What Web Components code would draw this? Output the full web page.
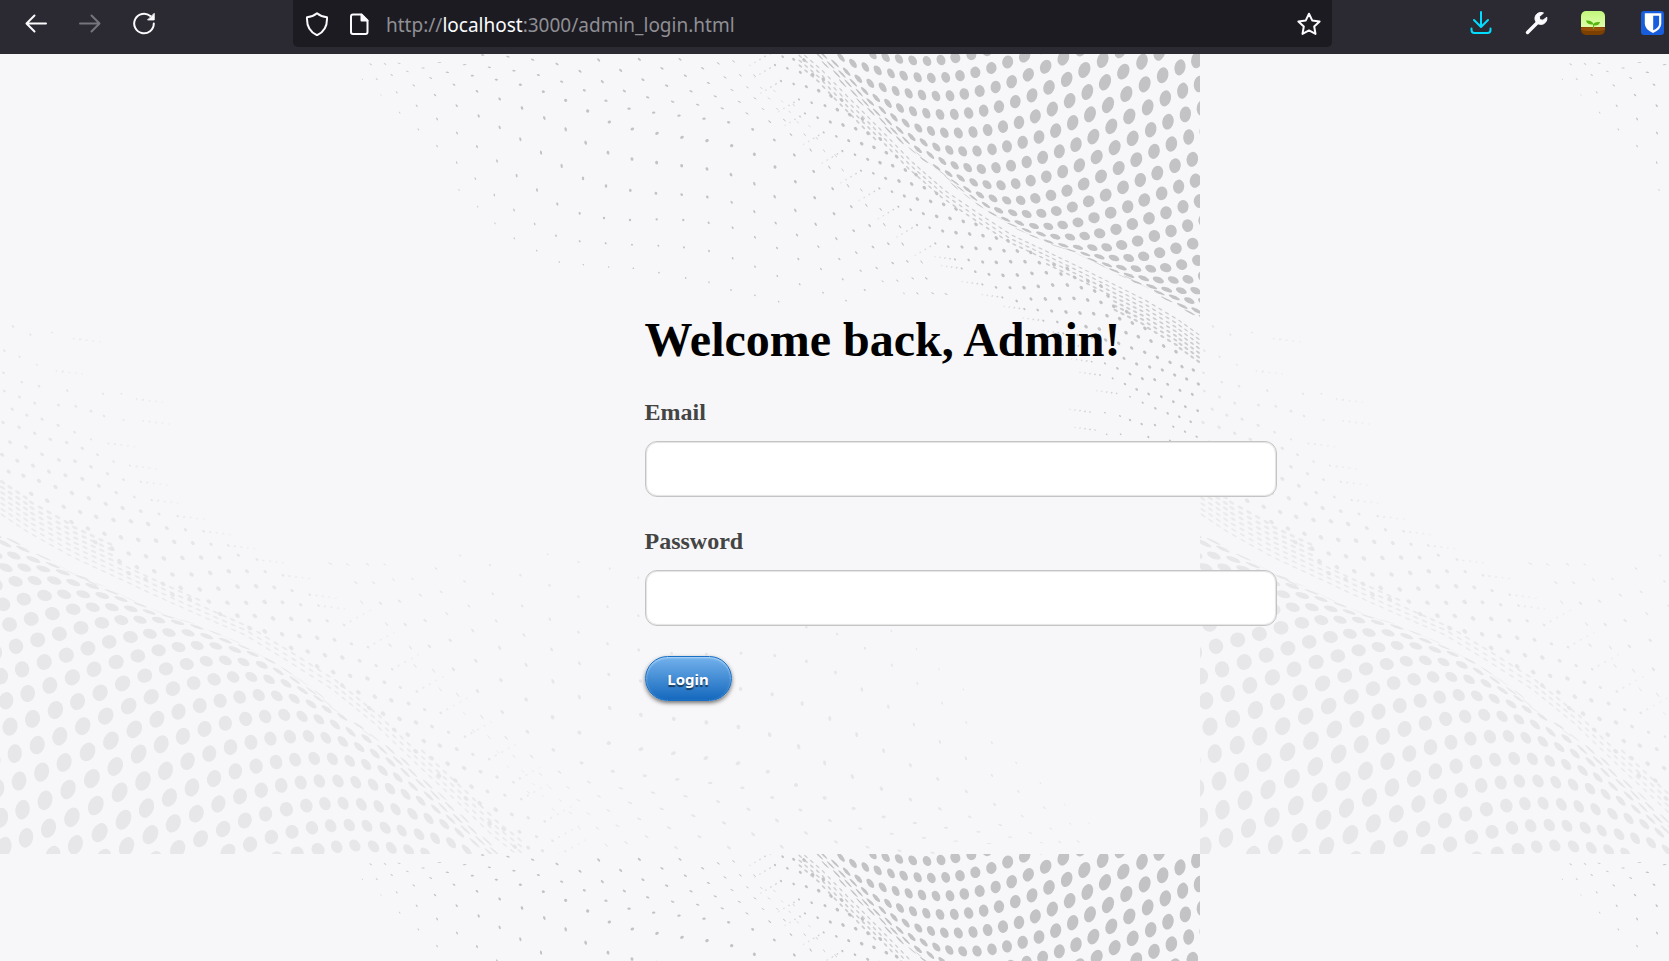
<!DOCTYPE html>
<html lang="en">
<head>
<meta charset="utf-8">
<meta name="viewport" content="width=device-width, initial-scale=1">
<title>Admin login</title>
<style>
html, body { margin: 0; }
body { min-height: 100vh; display: flex; flex-direction: column; background: #f7f7f9; font-family: "Liberation Serif", "Times New Roman", serif; }
wave-backdrop { flex: 1; }
</style>
</head>
<body>
<browser-bar>
  <span slot="scheme">http://</span><span slot="host">localhost</span><span slot="path">:3000/admin_login.html</span>
</browser-bar>
<wave-backdrop>
  <login-form>
    <span slot="title">Welcome back, Admin!</span>
    <login-field kind="email" name="email">Email</login-field>
    <login-field kind="password" name="password">Password</login-field>
    <pill-button slot="action">Login</pill-button>
  </login-form>
</wave-backdrop>

<script>
function define(name, html, setup) {
  const template = document.createElement('template');
  template.innerHTML = html;
  customElements.define(name, class extends HTMLElement {
    constructor() {
      super();
      this.attachShadow({ mode: 'open' }).append(template.content.cloneNode(true));
    }
    connectedCallback() { if (setup) setup(this, this.shadowRoot); }
  });
}

define('tool-button', `
<style>
:host { display: block; width: 56px; height: 46px; flex: none; color: #fbfbfe; }
button { width: 100%; height: 100%; padding: 0; border: 0; background: none; color: inherit; display: grid; place-items: center; }
::slotted(svg) { display: block; width: 24px; height: 24px; }
</style>
<button type="button"><slot></slot></button>`, (host, root) => {
  const button = root.querySelector('button');
  button.setAttribute('aria-label', host.getAttribute('label'));
  button.disabled = host.hasAttribute('disabled');
});

define('browser-bar', `
<style>
:host { display: flex; align-items: flex-start; height: 54px; background: #2b2a33; position: relative; z-index: 1; }
nav { display: flex; padding-left: 9px; }
nav tool-button { width: 54px; }
nav tool-button[disabled] { color: #76757c; }
.address { flex: 1; min-width: 0; margin: 0 121px 0 122px; height: 47px; display: flex; align-items: center; background: #1c1b22; border-radius: 0 0 5px 5px; color: #8f8f94; }
.address tool-button { width: 42px; }
.address tool-button:first-child { margin-left: 3px; }
.address tool-button:last-child { width: 46px; }
.url { flex: 1; min-width: 0; margin-left: 6px; padding-top: 2px; white-space: nowrap; overflow: hidden; font: 19px/30px "Noto Sans", "Open Sans", sans-serif; outline: none; }
.url slot[name=host] { color: #fbfbfe; }
.tools { display: flex; }
.tools tool-button:last-child { width: 32px; margin-left: 16px; }
</style>
<nav aria-label="History">
  <tool-button label="Back"><svg viewBox="0 0 24 24" fill="none" stroke="currentColor" stroke-width="2" stroke-linecap="round" stroke-linejoin="round"><path d="M22 12.500H3M10.500 4.500l-8 8 8 8"/></svg></tool-button>
  <tool-button label="Forward" disabled><svg viewBox="0 0 24 24" fill="none" stroke="currentColor" stroke-width="2" stroke-linecap="round" stroke-linejoin="round"><path d="M2 12.500H21M13.500 4.500l8 8-8 8"/></svg></tool-button>
  <tool-button label="Reload"><svg viewBox="0 0 24 24" fill="none" stroke="currentColor" stroke-width="2" stroke-linecap="round"><path d="M21.800 12.500a9.800 9.800 0 1 1-3.500-7.500"/><path d="M22.200 2.700v6.200h-6.200z" fill="currentColor" stroke-width="1" stroke-linejoin="round"/></svg></tool-button>
</nav>
<div class="address">
  <tool-button label="Site protection"><svg viewBox="0 0 24 24" fill="none" stroke="currentColor" stroke-width="2" stroke-linejoin="round"><path d="M12 1.200C9.500 3.300 5.500 4.900 2 5.200 1.600 13 4.500 20 12 23.200 19.500 20 22.400 13 22 5.200 18.500 4.900 14.500 3.300 12 1.200z"/></svg></tool-button>
  <tool-button label="Site information"><svg viewBox="0 0 24 24" fill="none" stroke="currentColor" stroke-width="2" stroke-linejoin="round"><path d="M14 2.500H6Q4 2.500 4 4.500V20Q4 22 6 22H18.500Q20.500 22 20.500 20V9z"/><path d="M14.500 2.500V8.500H20.500z" fill="currentColor"/></svg></tool-button>
  <div class="url" role="textbox" aria-label="Address" contenteditable="true" spellcheck="false"><slot name="scheme"></slot><slot name="host"></slot><slot name="path"></slot></div>
  <tool-button label="Bookmark"><svg viewBox="0 0 24 24" fill="none" stroke="currentColor" stroke-width="2" stroke-linejoin="round"><path d="M12 1.700l3.200 6.700 7.400 1-5.400 5.100 1.300 7.400L12 18.400l-6.500 3.500 1.300-7.400L1.400 9.400l7.400-1z"/></svg></tool-button>
</div>
<div class="tools">
  <tool-button label="Downloads"><svg viewBox="0 0 24 24" fill="none" stroke="#00ddff" stroke-width="2" stroke-linecap="round" stroke-linejoin="round"><path d="M12 1v14.500M5 9l7 7 7-7M2.500 17.500v1.500q0 3 3 3h13q3 0 3-3v-1.500"/></svg></tool-button>
  <tool-button label="Developer tools"><svg viewBox="0 0 24 24" fill="none"><path d="M2.500 21.500L14 10" stroke="#fbfbfe" stroke-width="3.400" stroke-linecap="round"/><path d="M18.500 2A6 6 0 1 0 21.800 6.200L18 9.200 14.700 8.700 14.500 5.500z" fill="#fbfbfe" stroke="#fbfbfe" stroke-linejoin="round"/></svg></tool-button>
  <tool-button label="Sprout extension"><svg viewBox="0 0 24 24"><defs><linearGradient id="sky" x2="0" y2="1"><stop stop-color="#c2f77c"/><stop offset="1" stop-color="#e2ffb0"/></linearGradient><clipPath id="tile"><rect width="24" height="24" rx="5"/></clipPath></defs><g clip-path="url(#tile)"><path fill="url(#sky)" d="M0 0h24v18H0z"/><path fill="#7b3f00" d="M0 16h24v8H0z"/><ellipse cx="12" cy="18" rx="13" ry="2" fill="#96500a"/><path fill="#57b511" d="M12 18q.2-4 0-4.500Q6 14 5 9.500q6-.5 7.500 3.500 1-2.500 6.500-2-1 4-6 3.500.3 2 0 3.500z"/></g></svg></tool-button>
  <tool-button label="Password manager"><svg viewBox="0 0 24 24"><rect width="23" height="24" rx="3" fill="#175ddc"/><path fill="#fff" d="M3.800 2.200h16.500v10.500q0 5.500-8.300 9.200-8.200-3.700-8.200-9.200z"/><path fill="#175ddc" d="M12.200 4.700h5.900v8.200q0 3.500-5.900 6.400z"/></svg></tool-button>
</div>`);

define('login-field', `
<style>
:host { display: flex; flex-direction: column; gap: 15px; margin-bottom: 30px; }
label { color: #444; font-size: 24px; font-weight: bold; line-height: 28px; }
input { box-sizing: border-box; width: 100%; height: 56px; margin: 0; padding: 0 16px; background: #fff; border: 1px solid #c4c4c4; border-radius: 12px; box-shadow: inset 0 0 1px 1px #e4e4e4; font: 20px "Liberation Serif", serif; }
</style>
<label for="field"><slot></slot></label>
<input id="field">`, (host, root) => {
  const input = root.querySelector('input');
  input.type = host.getAttribute('kind');
  input.name = host.getAttribute('name');
});

define('pill-button', `
<style>
:host { display: block; }
button { width: 87px; height: 45px; padding: 0; border: 1px solid #1a70c5; border-radius: 23px; background: linear-gradient(#73b1ec, #1468bd); box-shadow: inset 0 1px 2px #b4d8f8, 0 2px 4px rgba(0,0,0,.55); color: #fff; font: bold 15px/20px "Noto Sans", "Open Sans", sans-serif; text-shadow: 0 2px 1px rgba(0,0,0,.55); }
</style>
<button type="submit"><slot></slot></button>`);

define('login-form', `
<style>
:host { display: block; margin-left: calc(50% - 190px); width: 632px; max-width: 100%; }
form { padding-bottom: 2px; }
h1 { margin: 0 0 30px; color: #000; font-size: 48px; line-height: 56px; white-space: nowrap; }
</style>
<form onsubmit="return false">
  <h1><slot name="title"></slot></h1>
  <slot></slot>
  <slot name="action"></slot>
</form>`);

/* Halftone sheets. Each row is [first column, x, y, x, y, ...] in thirds of a
   pixel; a dot is a circle sheared by the spacing of its neighbours. */
const crest = [
 [-3,278,14,317,22,357,27,398,31,441,33,483,30,526,23,574,14,621,2],
 [-6,183,22,219,40,256,51,293,61,333,70,371,77,413,82,454,84,497,82,540,77,586,67,634,54,683,36,734,18,787,-8],
 [-8,130,15,165,40,200,65,235,86,271,100,308,112,347,123,386,130,426,135,468,138,510,137,553,132,599,123,647,111,695,95,745,74,797,50,850,24,903,-4],
 [-9,118,18,152,45,186,72,220,98,254,123,289,144,324,160,360,174,399,184,439,190,480,193,523,193,566,189,611,182,657,170,706,155,756,136,807,112,860,88,913,60,968,30,1021,2],
 [-9,136,44,170,72,204,100,238,128,271,156,307,180,342,202,377,219,415,234,453,243,493,248,535,249,579,246,623,240,669,230,717,217,766,199,817,177,869,152,922,126,975,97,1030,65,1086,35,1138,8],
 [-8,188,100,222,130,256,158,290,187,325,214,359,240,395,261,431,277,469,291,508,300,548,304,591,303,636,298,681,289,728,277,777,261,827,242,878,218,930,193,984,165,1039,132,1094,103,1148,76,1200,52,1250,30],
 [-7,240,156,273,185,308,214,342,243,378,271,414,298,451,315,487,333,524,346,563,353,604,357,648,353,693,347,740,336,788,322,838,304,888,284,940,260,994,229,1048,199,1103,172,1156,145,1208,122,1258,102],
 [-5,325,241,360,271,396,301,432,330,470,352,506,371,542,384,581,397,621,404,663,406,707,401,752,392,799,380,848,365,898,346,950,321,1004,293,1058,265,1112,239,1164,215,1216,193,1267,174],
 [-3,414,312,450,341,488,370,525,397,562,418,600,435,639,445,680,451,722,451,766,445,813,436,861,422,911,402,963,379,1016,354,1069,329,1122,304,1174,282,1226,261,1275,242],
 [-2,468,356,504,386,541,416,580,443,618,465,656,481,698,488,740,492,784,490,829,483,877,471,926,454,977,435,1029,412,1081,390,1132,369,1185,347,1237,328],
 [-1,523,408,560,438,598,466,637,491,677,508,718,519,762,528,805,529,848,525,894,517,942,503,992,488,1043,470,1093,450,1145,430,1196,410,1246,392],
 [0,578,450,616,478,656,503,697,525,740,541,783,552,826,560,870,561,914,558,959,550,1008,538,1057,522,1107,505,1158,488,1209,470,1258,453],
 [1,635,490,676,516,718,540,763,560,806,575,850,586,894,592,937,593,980,592,1025,585,1073,573,1123,558,1173,543,1223,527,1272,512],
 [3,738,549,783,569,828,588,873,601,916,612,958,620,1002,624,1046,624,1091,619,1139,608,1188,595,1238,581],
 [5,848,594,893,612,937,630,981,644,1024,653,1068,656,1112,656,1157,653,1205,644,1253,631],
 [6,913,622,958,643,1003,662,1047,676,1091,685,1135,690,1180,690,1224,688,1270,680],
 [7,980,655,1025,678,1070,697,1115,710,1160,719,1204,722,1247,722],
 [8,1047,684,1092,708,1138,728,1183,742,1228,752,1270,755],
 [9,1115,722,1160,748,1207,768,1250,782],
 [10,1184,762,1229,787,1272,805]
];
const slope = [
 [5,1181,34,1243,76,1303,122,1361,165],
 [4,1135,40,1201,76,1264,114,1326,154,1380,200],
 [2,1020,28,1088,55,1155,82,1222,112,1287,145,1349,185,1408,228],
 [0,898,28,966,55,1036,77,1105,99,1176,120,1245,145,1311,176,1373,217,1431,265,1487,317],
 [-2,776,30,842,61,909,89,980,107,1053,124,1126,139,1198,155,1269,177,1333,210,1394,254,1452,302,1508,360,1564,420,1622,478,1680,530],
 [-7,428,15,504,20,578,29,651,42,720,64,787,95,853,123,923,142,998,155,1073,164,1147,175,1221,190,1289,215,1353,254,1412,300,1468,352,1524,407,1579,466,1633,524,1688,582,1745,636],
 [-9,298,38,374,44,448,52,522,62,595,75,665,95,733,121,798,152,867,176,941,188,1017,197,1092,206,1166,217,1238,238,1303,270,1363,315,1421,364,1478,416,1534,470,1589,527,1645,581,1702,634,1759,685,1818,732],
 [-10,177,40,249,54,322,67,397,77,469,89,541,104,610,125,677,151,743,183,808,216,877,237,951,250,1026,262,1101,272,1175,287,1243,313,1305,351,1366,395,1424,443,1482,491,1541,542,1599,591,1658,639,1718,685,1778,730],
 [-11,135,42,202,64,272,84,342,104,411,124,479,147,546,174,613,204,677,238,737,278,804,308,876,327,950,338,1025,347,1101,357,1173,374,1243,401,1304,440,1366,481,1427,523,1489,566,1549,608,1610,654,1672,692,1732,730],
 [-12,92,43,155,75,221,106,285,135,350,167,416,198,479,232,541,268,603,308,665,348,729,385,798,408,871,421,948,430,1025,434,1102,441,1175,457,1243,485,1307,519,1371,555,1435,590,1498,627,1562,662,1628,694,1692,730],
 [-12,110,87,170,127,230,167,291,207,351,249,411,290,471,333,530,377,591,420,652,462,719,490,792,504,870,510,950,508,1030,510,1106,518,1178,533,1245,562,1311,594,1375,627,1443,657,1508,688,1574,720],
 [-13,67,88,123,135,179,188,235,238,291,288,350,338,406,386,463,435,522,480,584,522,648,557,719,574,797,580,876,584,955,587,1032,592,1107,603,1178,625,1245,650,1312,678,1379,703,1449,728,1518,752],
 [-8,357,420,413,470,465,520,523,565,590,602,658,636,730,644,806,651,880,655,957,668,1037,684,1107,697,1173,720,1245,736,1316,755]
];
/* Fine dots past the fold, from the far end of each row up to the fold. */
const hollow = [
 [-30,10,8,20,41,28,72,30],
 [-15,45,22,55,61,67,98,74,130,88],
 [3,93,41,102,79,110,116,122,153,138,185,150],
 [57,148,95,158,135,167,172,179,209,194,247,207],
 [75,190,113,203,151,216,189,225,227,236,264,250,301,267],
 [131,247,169,259,206,272,245,281,282,292,319,308,350,320],
 [187,303,225,314,263,328,300,338,338,347,376,360,408,374],
 [243,362,280,370,317,385,357,393,395,402,433,413,470,430],
 [298,415,336,425,373,438,412,447,452,454,491,463,528,477],
 [355,470,392,479,430,491,470,499,510,505,550,514,588,523],
 [411,525,449,533,488,543,528,548,569,552,609,557,649,564,684,572],
 [466,580,505,590,546,591,588,595,630,596,672,602,712,603,752,607],
 [525,628,566,630,608,636,649,637,692,635,735,635,778,638,822,644,862,655],
 [545,655,586,665,627,673,669,676,712,675,756,670,799,668,843,672,884,682,924,693,963,708],
 [607,703,648,712,690,713,732,713,775,709,818,705,862,705,904,713,944,723,984,738],
 [667,742,710,753,753,747,796,747,839,746,882,745,923,750,963,757,1001,769,1040,785],
 [733,777,773,780,815,783,858,786,900,789,941,791,981,797,1019,806,1057,819,1095,835],
 [790,812,832,816,875,820,918,830,958,837,998,840,1038,848,1075,860,1113,873,1151,888,1188,905],
 [850,850,893,855,935,862,977,870,1016,880,1055,894,1094,907,1132,922,1170,937,1206,950,1240,960],
 [910,890,950,897,992,908,1032,925,1070,942,1109,951,1147,960,1184,975,1220,987,1255,1002],
 [935,935,975,940,1012,955,1050,972,1087,986,1124,989,1163,1003,1200,1021,1237,1033,1270,1050],
 [960,975,998,985,1035,1002,1070,1018,1106,1032,1144,1040,1180,1055,1216,1070,1253,1082],
 [1010,1030,1050,1040,1088,1058,1126,1075,1163,1090,1198,1100,1232,1115,1268,1130],
 [930,1086,975,1088,1020,1098,1050,1110,1085,1122,1125,1125,1180,1130,1215,1145,1250,1160],
 [945,1140,980,1153,1022,1153,1105,1161,1170,1172,1210,1182,1252,1205],
 [1130,1210,1175,1225,1215,1245,1250,1260],
 [1090,1290,1140,1305,1190,1300,1230,1320]
];
/* Lower edge of the crest; the slivers squeezed under it follow this line. */
const fold = [[60,-10],[130,50],[200,122],[300,222],[400,325],[500,412],[600,480],[700,545],[800,592],[900,640],[1000,690],[1100,740],[1200,800],[1270,850]];
const sub = (a, b) => [a[0] - b[0], a[1] - b[1]];
const round = n => Math.round(n * 100) / 100;

function dot(m, x, y) {
  return `<circle r="1" transform="matrix(${m.map(round)} ${round(x)} ${round(y)})"/>`;
}
function sheet(rows, ox, radius) {
  const at = (j, i) => {
    const row = rows[j];
    if (!row) return null;
    const k = 1 + 2 * (i - row[0]);
    return k > 0 && k < row.length ? [row[k], row[k + 1]] : null;
  };
  let out = '';
  rows.forEach((row, j) => {
    for (let i = row[0]; at(j, i); i++) {
      const p = at(j, i);
      const r1 = at(j, i + 1), l1 = at(j, i - 1), d1 = at(j + 1, i), u1 = at(j - 1, i);
      const du = r1 ? sub(r1, p) : sub(p, l1);
      const dv = d1 && u1 ? sub(d1, u1).map(n => n / 2) : d1 ? sub(d1, p) : u1 ? sub(p, u1) : [10, 40];
      const m = [du[0], du[1], dv[0], dv[1]].map(n => n / 3 * radius(i, j));
      out += dot(m, p[0] / 3 + ox, p[1] / 3 - 4);
    }
  });
  return out;
}
function speck(x, y, rx, ry, turn, opacity = 1) {
  return `<ellipse rx="${round(rx)}" ry="${round(ry)}" opacity="${round(opacity)}" transform="translate(${round(x / 3 + 780)} ${round(y / 3 - 4)}) rotate(${round(turn)})"/>`;
}
function fineDots() {
  let out = '';
  hollow.forEach((row, j) => {
    const fade = j < 17 ? 1 : Math.max(.6, 1 - (j - 17) * .06);
    const count = row.length / 2;
    for (let i = 0; i < count; i++) {
      const grow = Math.min(1, .6 + i * .13) * fade;
      out += speck(row[2 * i], row[2 * i + 1], 2.1 * grow, 1.5 * grow, 45);
    }
    for (let k = 1; k < 5; k++) out += speck(row[0] - 15 * k, row[1] + (j < 12 ? 9 : -2) * k, 1, .8, -40, .9 - k * .15);
  });
  return out;
}
function slivers() {
  let out = '';
  for (let s = 0; s < fold.length - 1; s++) {
    const [a, b] = [fold[s], fold[s + 1]];
    const d = sub(b, a), length = Math.hypot(d[0], d[1]), turn = Math.atan2(d[1], d[0]) * 180 / Math.PI;
    const steps = Math.round(length / 24);
    const open = s < 3 ? 4 : s < 8 ? 3 : s < 10 ? 4 : 7;
    for (let k = 0; k < steps; k++) for (let n = 1; n <= open; n++) {
      const t = (k + n * .3) / steps;
      out += speck(a[0] + d[0] * t - n * 5, a[1] + d[1] * t + n * 10, 2.4, .6 + n * .08, turn, .8);
    }
  }
  return out;
}

define('wave-backdrop', `
<style>
:host { display: flex; flex-direction: column; justify-content: center; position: relative; overflow: hidden; background: #f7f7f9; }
svg { position: absolute; inset: 0; width: 100%; height: 100%; }
.content { position: relative; }
</style>
<svg aria-hidden="true">
  <defs>
    <g id="wave">${sheet(crest, 780, (i, j) => .29 + Math.max(0, Math.min(.04, i * .004)))}${sheet(slope, 340, (i, j) => Math.min(.068, .032 + .007 * Math.max(0, 12 - j)))}${fineDots()}${slivers()}</g>
    <pattern id="paper" width="1200" height="800" patternUnits="userSpaceOnUse">
      <use href="#wave" fill="#c3c3c5"/>
      <use href="#wave" fill="#e7e7e9" transform="translate(0 800) scale(-1.300 -1.210) translate(-1200 0)"/>
    </pattern>
  </defs>
  <rect width="100%" height="100%" fill="url(#paper)"/>
</svg>
<div class="content"><slot></slot></div>`);
</script>
</body>
</html>
